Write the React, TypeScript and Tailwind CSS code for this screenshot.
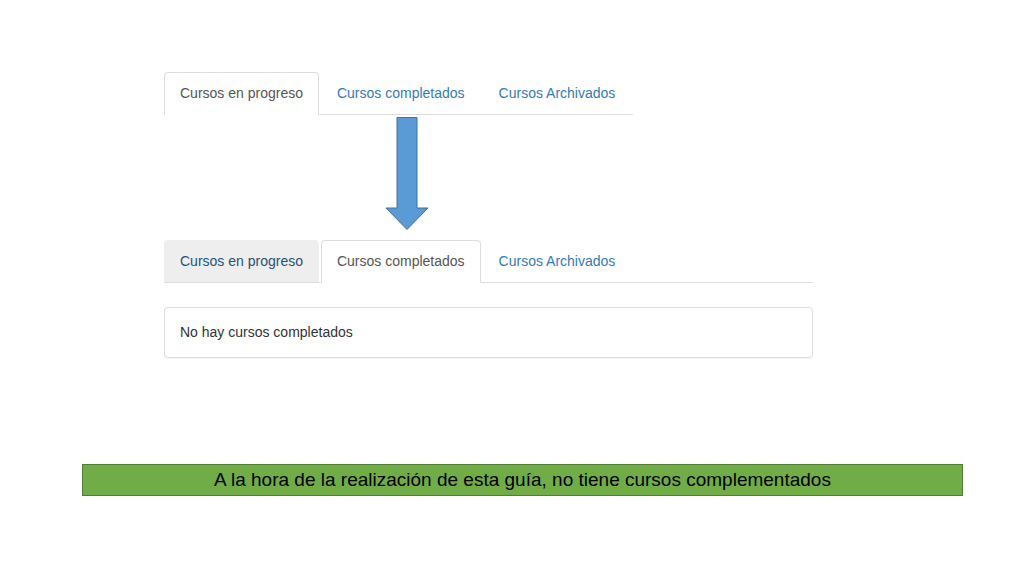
const font = { fontFamily: '"Liberation Sans", Arial, sans-serif' };

type Tab = { label: string; state: 'active' | 'link' | 'hover' };

function TabRow({ tabs, width }: { tabs: Tab[]; width: string }) {
  return (
    <div className={`flex whitespace-nowrap border-b border-[#dddddd] ${width}`}>
      {tabs.map((t) => {
        if (t.state === 'active') {
          return (
            <div
              key={t.label}
              className="-mb-px mr-[2px] flex h-[43px] shrink-0 items-center rounded-t border border-[#dddddd] border-b-white bg-white px-[15px] text-[14px] text-[#555555]"
            >
              {t.label}
            </div>
          );
        }
        if (t.state === 'hover') {
          return (
            <div
              key={t.label}
              className="mr-[2px] flex h-[42px] shrink-0 items-center rounded-t bg-[#eeeeee] px-4 text-[14px] text-[#23527c]"
            >
              {t.label}
            </div>
          );
        }
        return (
          <div key={t.label} className="mr-[2px] flex h-[42px] shrink-0 items-center px-4 text-[14px] text-[#337ab7]">
            {t.label}
          </div>
        );
      })}
    </div>
  );
}

function DownArrow() {
  return (
    <svg width="44" height="114" viewBox="0 0 44 114" className="ml-[221px] mt-[2px] block">
      <polygon
        points="12,0.5 32,0.5 32,91 43,91 22,112.5 1,91 12,91"
        fill="#5b9bd5"
        stroke="#41719c"
        strokeWidth="1"
      />
    </svg>
  );
}

export default function App() {
  return (
    <div className="h-[576px] w-[1024px] overflow-hidden bg-white" style={font}>
      <div className="flex flex-col items-start pl-[164px] pt-[72px]">
        <TabRow
          width="w-fit"
          tabs={[
            { label: 'Cursos en progreso', state: 'active' },
            { label: 'Cursos completados', state: 'link' },
            { label: 'Cursos Archivados', state: 'link' },
          ]}
        />
        <DownArrow />
        <div className="mt-[9px]">
          <TabRow
            width="w-[649px]"
            tabs={[
              { label: 'Cursos en progreso', state: 'hover' },
              { label: 'Cursos completados', state: 'active' },
              { label: 'Cursos Archivados', state: 'link' },
            ]}
          />
        </div>
        <div className="mt-[24px] flex h-[51px] w-[649px] items-center rounded border border-[#dddddd] px-[15px] text-[14px] text-[#333333] shadow-[0_1px_1px_rgba(0,0,0,0.05)]">
          No hay cursos completados
        </div>
      </div>
      <div className="ml-[82px] mt-[106px] flex h-[32px] w-[881px] items-center justify-center whitespace-nowrap border border-[#507e32] bg-[#70ad47] text-[19px] text-black">
        A la hora de la realización de esta guía, no tiene cursos complementados
      </div>
    </div>
  );
}
